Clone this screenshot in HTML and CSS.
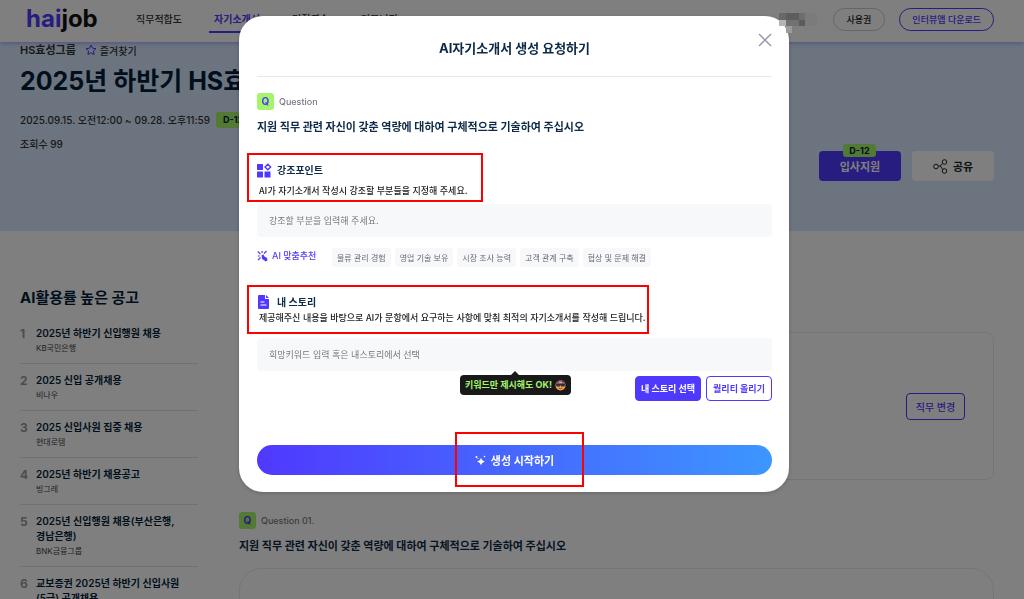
FILE: index.html
```html
<!DOCTYPE html>
<html lang="ko">
<head>
    <meta charset="UTF-8">
    <meta name="viewport" content="width=device-width, initial-scale=1.0">
    <title>haijob - AI자기소개서</title>
    <link rel="stylesheet" href="styles.css">
</head>
<body>
    <header class="header">
        <a href="#" class="logo"><span>hai</span>job</a>
        <nav class="nav">
            <a href="#">직무적합도</a>
            <a href="#" class="active">자기소개서</a>
            <a href="#">면접연습</a>
            <a href="#">커뮤니티</a>
        </nav>
        <div class="header-buttons">
            <button type="button" class="pill">사용권</button>
            <button type="button" class="pill pill-main">인터뷰앱 다운로드</button>
        </div>
    </header>

    <section class="banner">
        <div class="banner-info">
            <div class="company">
                HS효성그룹
                <button type="button" class="favorite">
                    <svg width="12" height="12" viewBox="0 0 12 12"><path d="M6 1l1.500 3.200 3.500.4-2.600 2.400.7 3.500L6 8.800l-3.100 1.700.7-3.500L1 4.600l3.500-.4z" fill="none" stroke="#4f39ff" stroke-linejoin="round"/></svg>
                    즐겨찾기
                </button>
            </div>
            <h1>2025년 하반기 HS효성그룹 신입사원 채용</h1>
            <div class="period">2025.09.15. 오전12:00 ~ 09.28. 오후11:59 <span class="dday">D-12</span></div>
            <div class="views">조회수 99</div>
        </div>
        <div class="banner-buttons">
            <button type="button" class="apply"><span class="apply-badge">D-12</span>입사지원</button>
            <button type="button" class="share">
                <svg width="15" height="15" viewBox="0 0 15 15" fill="none" stroke="#222"><circle cx="3" cy="7.500" r="2.300"/><circle cx="11.500" cy="3" r="2.300"/><circle cx="11.500" cy="12" r="2.300"/><path d="M5.300 7h2l2.300-2.500M7.300 7l2.500 3.500"/></svg>
                공유
            </button>
        </div>
    </section>

    <div class="content">
        <aside class="sidebar">
            <h2>AI활용률 높은 공고</h2>
            <ol>
                <li><b>1</b><a href="#">2025년 하반기 신입행원 채용<small>KB국민은행</small></a></li>
                <li><b>2</b><a href="#">2025 신입 공개채용<small>비나우</small></a></li>
                <li><b>3</b><a href="#">2025 신입사원 집중 채용<small>현대로템</small></a></li>
                <li><b>4</b><a href="#">2025년 하반기 채용공고<small>빙그레</small></a></li>
                <li><b>5</b><a href="#">2025년 신입행원 채용(부산은행, 경남은행)<small>BNK금융그룹</small></a></li>
                <li><b>6</b><a href="#">교보증권 2025년 하반기 신입사원<wbr>(5급) 공개채용</a></li>
            </ol>
        </aside>
        <main class="main">
            <div class="job-box">
                <button type="button" class="job-change">직무 변경</button>
            </div>
            <div class="question-label"><span class="q">Q</span>Question 01.</div>
            <p class="question-text">지원 직무 관련 자신이 갖춘 역량에 대하여 구체적으로 기술하여 주십시오</p>
            <div class="answer-box"></div>
        </main>
    </div>

    <div class="overlay">
        <form class="modal" role="dialog" aria-labelledby="modal-title">
            <div class="modal-header">
                <h2 id="modal-title">AI자기소개서 생성 요청하기</h2>
                <button type="button" class="close" aria-label="닫기">
                    <svg width="14" height="14" viewBox="0 0 14 14"><path d="M1 1l12 12M13 1L1 13" stroke="#9699a8" stroke-width="1.500"/></svg>
                </button>
            </div>

            <div class="question-label"><span class="q">Q</span>Question</div>
            <p class="question-text">지원 직무 관련 자신이 갖춘 역량에 대하여 구체적으로 기술하여 주십시오</p>

            <div class="callout callout-point">
                <label for="point">
                    <svg width="15" height="15" viewBox="0 0 15 15" fill="#4f39ff"><rect x="0" y="1" width="6" height="6" rx=".5"/><rect x="0" y="8.500" width="6" height="6" rx=".5"/><rect x="7.500" y="8.500" width="6" height="6" rx=".5"/><path d="M10.800 1.200l2.800 2.800-2.800 2.800L8 4z" fill="none" stroke="#4f39ff" stroke-width="1.400"/></svg>
                    강조포인트
                </label>
                <p>AI가 자기소개서 작성시 강조할 부분들을 지정해 주세요.</p>
            </div>
            <input type="text" id="point" class="field" placeholder="강조할 부분을 입력해 주세요.">

            <div class="suggest">
                <span class="suggest-title">
                    <svg width="11" height="12" viewBox="0 0 11 12"><path d="M4.500 5.500l1.800-1.200 1.200 2.200 2.600 1.500.4 2.600-2 .9-1.600-1.600-1.700-.6z" fill="#4f39ff"/><path d="M.8 1.500l2.700 2.700M5 1l.2 2M9.500 1L7 3.500M.8 6h2M3.500 7.500L1 10.200" stroke="#4f39ff" stroke-width="1.200" fill="none"/></svg>
                    AI 맞춤추천
                </span>
                <button type="button">물류 관리 경험</button>
                <button type="button">영업 기술 보유</button>
                <button type="button">시장 조사 능력</button>
                <button type="button">고객 관계 구축</button>
                <button type="button">협상 및 문제 해결</button>
            </div>

            <div class="callout callout-story">
                <label for="story">
                    <svg width="15" height="14" viewBox="0 0 15 14"><path d="M2 0h6v4h4v9a1 1 0 0 1-1 1H2a1 1 0 0 1-1-1V1a1 1 0 0 1 1-1zM9 0l3 3H9z" fill="#4f39ff"/><path d="M3.500 7h4M3.500 10h6" stroke="#fff" stroke-width="1.200"/></svg>
                    내 스토리
                </label>
                <p>제공해주신 내용을 바탕으로 AI가 문항에서 요구하는 사항에 맞춰 최적의 자기소개서를 작성해 드립니다.</p>
            </div>
            <div class="story-field">
                <input type="text" id="story" class="field" placeholder="희망키워드 입력 혹은 내스토리에서 선택">
                <div class="tooltip">
                    키워드만 제시해도 OK!
                    <svg width="11" height="11" viewBox="0 0 11 11"><circle cx="5.500" cy="5.500" r="5" fill="#f5a343"/><path d="M.6 4.500a5 5 0 0 1 9.800 0z" fill="#7b5674"/><path d="M.8 4h9.400L9.500 6.500H6.300L5.500 5.300l-.8 1.200H1.500z" fill="#352a4b"/><path d="M3.500 8q2 1.500 4 0" stroke="#98452b" fill="none"/><path d="M4 2.300h3" stroke="#ffd05c"/></svg>
                </div>
            </div>
            <div class="story-buttons">
                <button type="button" class="btn-fill">내 스토리 선택</button>
                <button type="button" class="btn-line">퀄리티 올리기</button>
            </div>

            <div class="submit-area">
                <button type="submit" class="submit">
                    <svg width="11" height="11" viewBox="0 0 11 11" fill="#fff"><path d="M6 2.500q.5 3 4 4-3.500 1-4 4-.5-3-4-4 3.500-1 4-4z"/><circle cx="1.500" cy="2" r="1"/><circle cx="9.500" cy="1.500" r=".8"/><circle cx="3" cy="3.600" r=".5"/></svg>
                    생성 시작하기
                </button>
                <span class="submit-mark"></span>
            </div>

            <!-- 사용자 이름 가림 -->
            <svg class="mosaic" width="39" height="20" viewBox="0 0 39 20" shape-rendering="crispEdges">
                <rect x="0" y="0" width="7" height="7" fill="#686868"/>
                <rect x="7" y="0" width="13" height="7" fill="#5d5d5d"/>
                <rect x="20" y="0" width="6" height="7" fill="#6e6e6e"/>
                <rect x="26" y="0" width="12" height="13" fill="#7b7b7b"/>
                <rect x="0" y="7" width="7" height="6" fill="#b4b4b4"/>
                <rect x="7" y="7" width="13" height="6" fill="#717171"/>
                <rect x="20" y="7" width="6" height="6" fill="#5b5b5b"/>
                <rect x="7" y="13" width="6" height="7" fill="#9b9b9b"/>
            </svg>
        </form>
    </div>
</body>
</html>
```
FILE: styles.css
```css
* {
    box-sizing: border-box;
}
body {
    margin: 0;
    height: 100vh;
    overflow: hidden;
    font-family: Inter, "Noto Sans CJK KR", sans-serif;
    font-size: 10px;
    line-height: 16px;
    color: #333;
    background: #fff;
}
h1, h2, p, ol {
    margin: 0;
    padding: 0;
}
a {
    color: inherit;
    text-decoration: none;
}
button, input {
    font-family: inherit;
    cursor: pointer;
}
button {
    display: flex;
    align-items: center;
    justify-content: center;
    padding: 0;
    border: none;
    white-space: nowrap;
}

/* header */
.header {
    position: relative;
    display: flex;
    align-items: center;
    height: 42px;
    padding: 0 30px 4px 26px;
    background: #fff;
    box-shadow: 0 1px 4px rgba(79, 57, 255, 0.4);
}
.logo {
    width: 110px;
    font-size: 24px;
    font-weight: 700;
    line-height: 30px;
    color: #111;
}
.logo span {
    color: #4f39ff;
}
.nav {
    display: flex;
    gap: 22px;
    font-weight: 500;
}
.nav a {
    padding: 5px 5px 4px;
    border-bottom: 2px solid transparent;
}
.nav a:first-child {
    padding-left: 0;
}
.nav .active {
    font-weight: 700;
    color: #4f39ff;
    border-color: #4f39ff;
}
.header-buttons {
    display: flex;
    gap: 14px;
    margin-left: auto;
}
.pill {
    height: 23px;
    padding: 0 13px;
    font-size: 9px;
    font-weight: 500;
    color: #222;
    background: none;
    border: 1px solid #ccc;
    border-radius: 12px;
}
.pill-main {
    padding: 0 12px;
    color: #4f39ff;
    border-color: #4f39ff;
}

/* banner */
.banner {
    display: flex;
    justify-content: space-between;
    height: 189px;
    padding: 0 30px 0 20px;
    background: #d8e8ff;
}
.company {
    display: flex;
    gap: 9px;
    font-weight: 600;
    font-size: 11px;
}
.favorite {
    gap: 3px;
    font-size: 10px;
    font-weight: 500;
    color: #333;
    background: none;
}
.banner h1 {
    margin: 7px 0 15px;
    font-size: 25px;
    line-height: 32px;
    color: #031f3a;
    white-space: nowrap;
}
.period {
    display: flex;
    align-items: center;
    gap: 6px;
    font-weight: 500;
}
.dday {
    padding: 0 7px;
    font-size: 9px;
    font-weight: 700;
    color: #031f3a;
    background: #a5f56a;
    border-radius: 3px;
}
.views {
    margin-top: 8px;
    font-weight: 500;
}
.banner-info {
    width: 600px;
}
.banner-buttons {
    display: flex;
    gap: 11px;
    margin-top: 109px;
}
.apply, .share {
    position: relative;
    gap: 5px;
    width: 82px;
    height: 30px;
    font-size: 11px;
    font-weight: 700;
    border-radius: 4px;
}
.apply {
    color: #fff;
    background: #4f39ff;
}
.apply-badge {
    position: absolute;
    top: -7px;
    left: 24px;
    width: 33px;
    font-size: 9px;
    line-height: 13px;
    color: #031f3a;
    background: #a5f56a;
    border-radius: 3px;
}
.share {
    color: #222;
    background: #fff;
}

/* content */
.content {
    display: flex;
    gap: 41px;
    padding: 0 30px 0 20px;
}
.sidebar {
    width: 178px;
    padding-top: 57px;
}
.sidebar h2 {
    margin-bottom: 9px;
    font-size: 15px;
    line-height: 20px;
    color: #031f3a;
}
.sidebar ol {
    list-style: none;
}
.sidebar li {
    display: flex;
    padding: 9px 12px 8px 0;
    line-height: 15px;
    border-bottom: 1px solid #e2e2e2;
    word-break: keep-all;
}
.sidebar li b {
    flex: 0 0 16px;
    font-size: 12px;
    color: #999;
}
.sidebar li a {
    font-weight: 600;
    color: #031f3a;
}
.sidebar small {
    display: block;
    font-size: 8px;
    font-weight: 400;
    line-height: 14px;
    color: #444;
}
.main {
    flex: 1;
    padding-top: 101px;
}
.job-box {
    display: flex;
    align-items: center;
    justify-content: flex-end;
    height: 148px;
    margin-bottom: 32px;
    padding-right: 28px;
    border: 1px solid #eaeaea;
    border-radius: 8px;
}
.job-change {
    width: 59px;
    height: 27px;
    font-size: 10px;
    font-weight: 500;
    color: #4f39ff;
    background: none;
    border: 1px solid #4f39ff;
    border-radius: 4px;
}
.answer-box {
    height: 200px;
    margin-top: 14px;
    border: 1px solid #eaeaea;
    border-radius: 22px;
}

/* question */
.question-label {
    display: flex;
    align-items: center;
    gap: 5px;
    height: 17px;
    font-size: 9px;
    font-weight: 500;
    color: #777985;
}
.q {
    width: 17px;
    font-size: 10px;
    font-weight: 700;
    line-height: 17px;
    text-align: center;
    color: #4f39ff;
    background: #a5f56a;
    border-radius: 3px;
}
.question-text {
    margin-top: 9px;
    font-size: 11px;
    font-weight: 700;
    color: #0e2a47;
}

/* modal */
.overlay {
    position: fixed;
    inset: 0;
    display: flex;
    align-items: flex-start;
    justify-content: center;
    padding: 16px 0 0 4px;
    background: rgba(0, 0, 0, 0.5);
}
.modal {
    position: relative;
    width: 550px;
    padding: 0 17px 17px 18px;
    background: #fff;
    border-radius: 24px;
    box-shadow: 0 1px 4px rgba(0, 0, 0, 0.2);
}
.modal-header {
    display: flex;
    align-items: center;
    justify-content: center;
    height: 61px;
    margin-bottom: 16px;
    padding-top: 4px;
    border-bottom: 1px solid #e6e8ee;
}
.modal-header h2 {
    font-size: 13px;
    color: #0e2a47;
}
.close {
    position: absolute;
    top: 17px;
    right: 17px;
    background: none;
}
.callout {
    width: fit-content;
    height: 49px;
    margin-left: -10px;
    border: 2px solid #f00;
}
.callout-point {
    margin-top: 18px;
    padding: 7px 14px 0 8px;
}
.callout-story {
    margin-top: 18px;
    padding: 7px 1px 0 8px;
}
.callout label {
    display: flex;
    align-items: center;
    gap: 5px;
    font-size: 10px;
    font-weight: 700;
    color: #0e2a47;
}
.callout p {
    padding-left: 2px;
    font-family: "Noto Sans CJK KR", sans-serif;
    font-size: 9px;
    font-weight: 500;
    color: #222;
    white-space: nowrap;
}
.callout-point p {
    margin-top: 5px;
}
.field {
    display: block;
    width: 100%;
    height: 33px;
    padding: 0 12px;
    font-size: 9px;
    color: #222;
    background: #f7f8fa;
    border: none;
    border-radius: 4px;
    cursor: text;
}
.field::placeholder {
    color: #777;
}
.callout-point + .field {
    margin-top: 2px;
}
.suggest {
    display: flex;
    gap: 4px;
    margin-top: 11px;
}
.suggest-title {
    display: flex;
    align-items: center;
    gap: 4px;
    width: 71px;
    height: 16px;
    font-size: 9px;
    font-weight: 500;
    color: #4f39ff;
}
.suggest button {
    height: 19px;
    padding: 0 5px;
    font-size: 8px;
    color: #666974;
    background: #f7f8fa;
    border-radius: 3px;
}
.story-field {
    position: relative;
    margin-top: 4px;
}
.tooltip {
    position: absolute;
    top: 37px;
    left: 203px;
    display: flex;
    align-items: center;
    gap: 3px;
    height: 20px;
    padding: 0 5px;
    font-size: 9px;
    font-weight: 700;
    color: #a5f56a;
    background: #191919;
    border-radius: 4px;
    white-space: nowrap;
}
.tooltip::before {
    content: "";
    position: absolute;
    top: -4px;
    left: 51px;
    border: 4px solid transparent;
    border-top: none;
    border-bottom-color: #191919;
}
.story-buttons {
    display: flex;
    justify-content: flex-end;
    gap: 5px;
    margin-top: 5px;
}
.story-buttons button {
    width: 66px;
    height: 25px;
    font-size: 9px;
    font-weight: 700;
    border: 1px solid #4f39ff;
    border-radius: 4px;
}
.btn-fill {
    color: #fff;
    background: #4f39ff;
}
.btn-line {
    color: #4f39ff;
    background: #fff;
}
.submit-area {
    position: relative;
    margin-top: 44px;
}
.submit {
    gap: 5px;
    width: 100%;
    height: 30px;
    font-size: 11px;
    font-weight: 700;
    color: #fff;
    background: linear-gradient(90deg, #4f39ff, #3d96ff);
    border-radius: 15px;
}
.submit-mark {
    position: absolute;
    top: -13px;
    left: 198px;
    width: 129px;
    height: 55px;
    border: 2px solid #f00;
    pointer-events: none;
}
.mosaic {
    position: absolute;
    top: -3px;
    right: -29px;
}
```
